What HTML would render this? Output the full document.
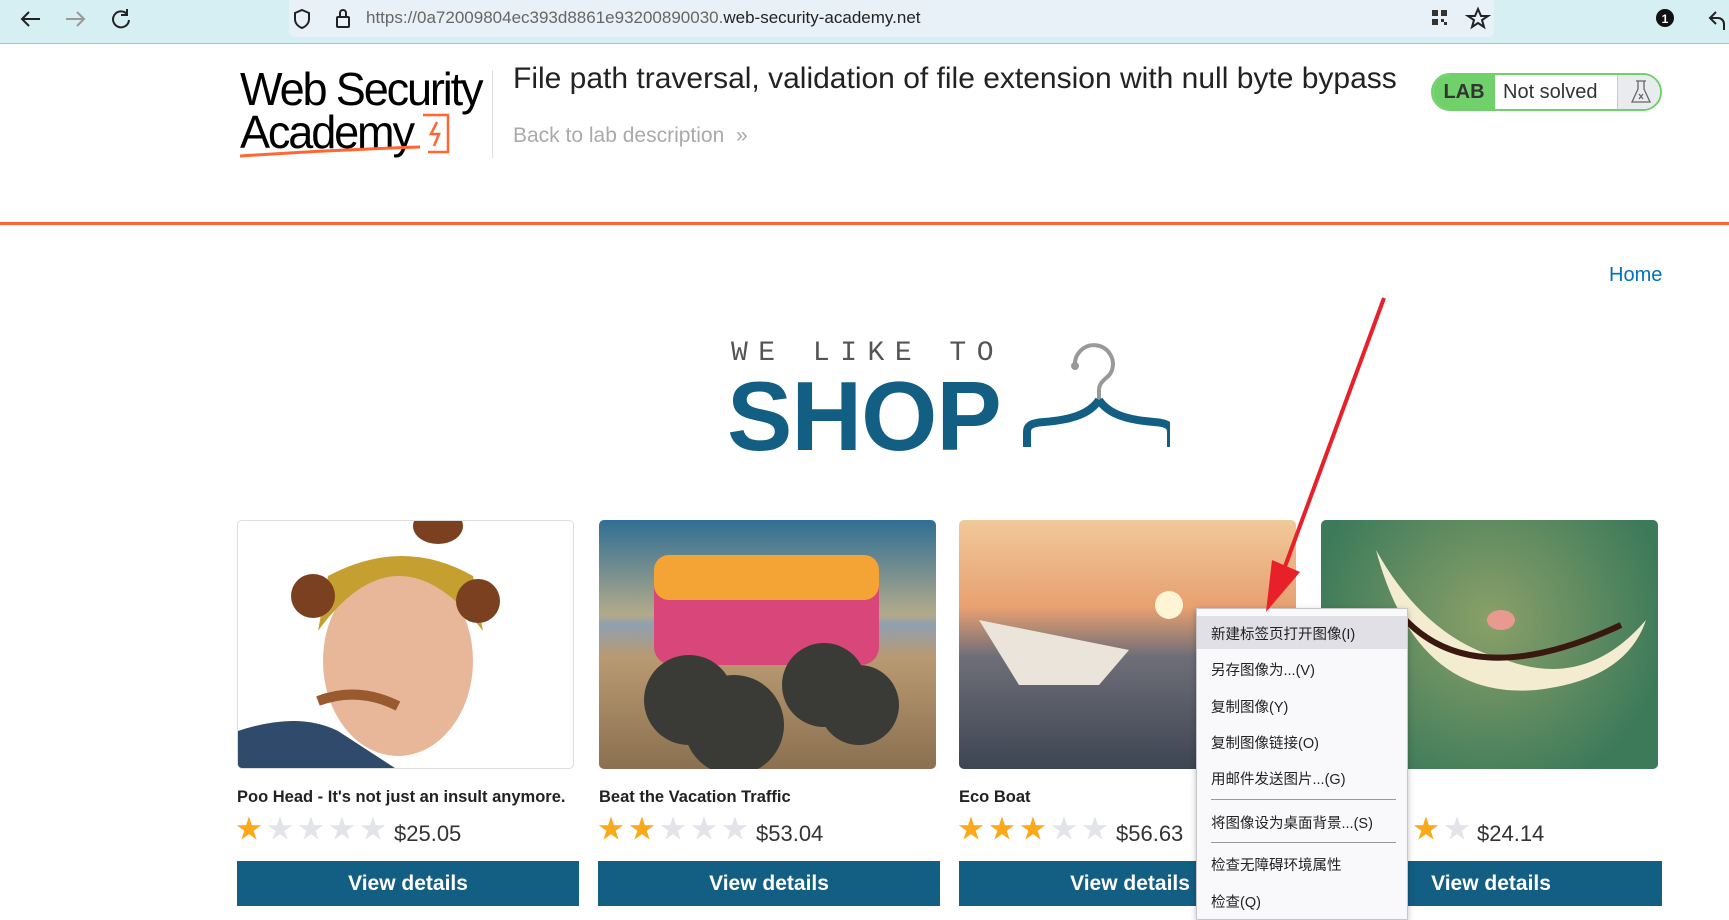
<!DOCTYPE html>
<html><head><meta charset="utf-8"><style>
*{margin:0;padding:0;box-sizing:border-box}
body{width:1729px;height:918px;overflow:hidden;background:#fff;font-family:"Liberation Sans","Noto Sans CJK SC",sans-serif;position:relative}
.abs{position:absolute}
.bar{left:0;top:0;width:1729px;height:44px;background:#d5eff3;border-bottom:1px solid #a9c4c8}
.url{left:289px;top:0;width:1205px;height:37px;background:#e8f1f7;border-radius:0 0 6px 6px}
.card{width:337px;height:249px;border-radius:5px;overflow:hidden}
.ttl{font-weight:bold;font-size:16.5px;color:#222}
.btn{width:342px;height:45px;background:#135e83;color:#fff;font-weight:bold;font-size:21px;text-align:center;line-height:45px}
.price{font-size:22px;color:#333}
.star{font-size:26px;line-height:27px;letter-spacing:5px}
.on{color:#f9a91a}.off{color:#e2e4ea}
.menu{left:1196px;top:608px;width:212px;height:312px;background:#f9f9fb;border:1px solid #c8c8cc;box-shadow:0 2px 6px rgba(0,0,0,.25)}
.mi{position:absolute;left:14px;font-size:14.5px;color:#222}
.sep{position:absolute;left:14px;width:185px;height:1px;background:#999}
</style></head><body>
<div class="abs bar"></div>
<div class="abs url"></div>
<svg class="abs" style="left:0;top:0" width="1729" height="44">
<g stroke="#222" stroke-width="2" fill="none">
<path d="M40 19H22M29 12l-7 7 7 7"/>
<path d="M66 19h17M77 12l7 7-7 7" stroke="#999"/>
<path d="M127 14a8 8 0 1 0 2 6M127 9v6h-6"/>
<path d="M302 10l7 3v6c0 5-4 8-7 9-3-1-7-4-7-9v-6z"/>
<rect x="337" y="17" width="12" height="10" rx="1"/><path d="M340 17v-4a3 3 0 0 1 6 0v4"/>
<path d="M1478 9l3 7h7l-6 4 2 7-6-4-6 4 2-7-6-4h7z"/>
<path d="M1716 12l-6 6 6 6M1710 18h8a6 6 0 0 1 6 6v6"/>
</g>
<g fill="#333"><rect x="1432" y="10" width="6" height="6"/><rect x="1441" y="10" width="6" height="6"/><rect x="1432" y="19" width="6" height="6"/><rect x="1441" y="19" width="3" height="3"/><rect x="1444" y="22" width="3" height="3"/></g>
<circle cx="1665" cy="18" r="9" fill="#111"/><text x="1665" y="23" font-size="12" fill="#fff" text-anchor="middle" font-weight="bold" font-family="Liberation Sans">1</text>
</svg>
<div class="abs" style="left:366px;top:8px;font-size:17px;color:#666">https://0a72009804ec393d8861e93200890030.<span style="color:#222">web-security-academy.net</span></div>

<div class="abs" style="left:240px;top:68px;font-size:46px;line-height:43px;letter-spacing:-2.2px;color:#000;transform:scaleX(0.98);transform-origin:left">Web Security<br>Academy</div>
<svg class="abs" style="left:238px;top:112px" width="230" height="50"><path d="M185 3h25v37h-20" stroke="#f63" stroke-width="2.5" fill="none"/><path d="M199 10l-6 12 8 0-5 12" stroke="#f63" stroke-width="2.5" fill="none"/><path d="M2 44q90-6 180-9" stroke="#f63" stroke-width="3" fill="none"/></svg>
<div class="abs" style="left:492px;top:70px;width:1px;height:88px;background:#ddd"></div>
<div class="abs" style="left:513px;top:62px;font-size:30px;color:#222">File path traversal, validation of file extension with null byte bypass</div>
<div class="abs" style="left:513px;top:124px;font-size:21px;color:#aaa">Back to lab description &nbsp;»</div>
<div class="abs" style="left:1431px;top:73px;width:231px;height:38px;border:2px solid #70d16a;border-radius:20px;overflow:hidden;background:#fff">
<div class="abs" style="left:0;top:0;width:62px;height:34px;background:#70d16a;font-weight:bold;font-size:20px;line-height:34px;text-align:center;color:#333">LAB</div>
<div class="abs" style="left:70px;top:0;font-size:20px;line-height:34px;color:#333">Not solved</div>
<div class="abs" style="left:184px;top:0;width:47px;height:34px;background:#e9ecef;border-left:1px solid #ccc"></div>
<svg class="abs" style="left:196px;top:4px" width="24" height="26"><path d="M9 2v8L3 23h18L15 10V2M7 2h10M10 15l4 5M14 15l-4 5" stroke="#666" stroke-width="1.3" fill="none"/></svg>
</div>
<div class="abs" style="left:0;top:222px;width:1729px;height:3px;background:#ff6633"></div>
<div class="abs" style="left:1609px;top:264px;font-size:20px;color:#0071bc">Home</div>

<div class="abs" style="left:731px;top:338px;font-family:'Liberation Mono',monospace;font-size:28px;letter-spacing:10.5px;color:#555">WE LIKE TO</div>
<div class="abs" style="left:727px;top:360px;font-weight:bold;font-size:98px;color:#135e83;letter-spacing:-1px">SHOP</div>
<svg class="abs" style="left:1020px;top:340px" width="150" height="115"><path d="M55 26a19 19 0 1 1 37 4c-2 8-13 10-13 20v10" stroke="#999" stroke-width="4" fill="none"/><circle cx="55" cy="26" r="4" fill="#999"/><path d="M79 60c-10 15-30 20-55 22-15 1-17 5-17 10v15M79 60c10 15 30 20 55 22 15 1 17 5 17 10v15" stroke="#135e83" stroke-width="8" fill="none"/></svg>

<div class="abs card" style="left:237px;top:520px;border:1px solid #ddd;background:#fff">
<svg width="337" height="249"><ellipse cx="160" cy="140" rx="75" ry="95" fill="#e8b79a"/><path d="M80 110q80-110 165 0l-10-55q-70-40-145 0z" fill="#c5a030"/><circle cx="75" cy="75" r="22" fill="#7a4020"/><circle cx="240" cy="80" r="22" fill="#7a4020"/><ellipse cx="200" cy="5" rx="25" ry="18" fill="#7a4020"/><path d="M0 210q60-20 100 0l60 39H0z" fill="#2f4a6a"/><path d="M80 180q40-15 80 5" stroke="#9a5a30" stroke-width="10" fill="none"/></svg></div>
<div class="abs card" style="left:599px;top:520px;background:linear-gradient(#2f6f95 0%,#b2aa8a 38%,#8fa0b0 42%,#b99a72 55%,#8a7050 100%)">
<svg width="337" height="249"><rect x="55" y="35" width="225" height="110" rx="18" fill="#d8467a"/><rect x="55" y="35" width="225" height="45" rx="15" fill="#f4a434"/><g fill="#3a3a36"><circle cx="90" cy="180" r="45"/><circle cx="225" cy="165" r="42"/><circle cx="135" cy="205" r="50"/><circle cx="260" cy="185" r="40"/></g></svg></div>
<div class="abs card" style="left:959px;top:520px;background:linear-gradient(#f1c99a 0%,#e8a070 35%,#6e6e78 55%,#3d4552 100%)">
<svg width="337" height="249"><circle cx="210" cy="85" r="14" fill="#fff5d5"/><path d="M20 100l150 30-30 35H60z" fill="#eae4da"/></svg></div>
<div class="abs card" style="left:1321px;top:520px;background:radial-gradient(circle at 50% 40%,#8aa068,#3c7a5a 80%)">
<svg width="337" height="249"><path d="M55 30q40 150 160 140q90-10 110-70q-60 70-140 40q-80-20-130-110z" fill="#f3ecd0"/><path d="M80 95q70 80 220 10" stroke="#3a1810" stroke-width="6" fill="none"/><ellipse cx="180" cy="100" rx="14" ry="10" fill="#e89a90"/></svg></div>

<div class="abs ttl" style="left:237px;top:788px">Poo Head - It's not just an insult anymore.</div>
<div class="abs ttl" style="left:599px;top:788px">Beat the Vacation Traffic</div>
<div class="abs ttl" style="left:959px;top:788px">Eco Boat</div>
<div class="abs ttl" style="left:1321px;top:788px">Cat Grin</div>

<div class="abs star" style="left:236px;top:816px"><span class="on">★</span><span class="off">★★★★</span></div><div class="abs price" style="left:394px;top:821px">$25.05</div>
<div class="abs star" style="left:598px;top:816px"><span class="on">★★</span><span class="off">★★★</span></div><div class="abs price" style="left:756px;top:821px">$53.04</div>
<div class="abs star" style="left:958px;top:816px"><span class="on">★★★</span><span class="off">★★</span></div><div class="abs price" style="left:1116px;top:821px">$56.63</div>
<div class="abs star" style="left:1320px;top:816px"><span class="on">★★★★</span><span class="off">★</span></div><div class="abs price" style="left:1477px;top:821px">$24.14</div>

<div class="abs btn" style="left:237px;top:861px">View details</div>
<div class="abs btn" style="left:598px;top:861px">View details</div>
<div class="abs btn" style="left:959px;top:861px">View details</div>
<div class="abs btn" style="left:1320px;top:861px">View details</div>

<div class="abs menu">
<div class="abs" style="left:0;top:7px;width:210px;height:33px;background:#e0e0e6"></div>
<div class="mi" style="top:14px">新建标签页打开图像(I)</div>
<div class="mi" style="top:50px">另存图像为...(V)</div>
<div class="mi" style="top:87px">复制图像(Y)</div>
<div class="mi" style="top:123px">复制图像链接(O)</div>
<div class="mi" style="top:159px">用邮件发送图片...(G)</div>
<div class="sep" style="top:190px"></div>
<div class="mi" style="top:203px">将图像设为桌面背景...(S)</div>
<div class="sep" style="top:233px"></div>
<div class="mi" style="top:245px">检查无障碍环境属性</div>
<div class="mi" style="top:282px">检查(Q)</div>
</div>
<svg class="abs" style="left:1250px;top:290px" width="150" height="330"><path d="M134 8L30 290" stroke="#e8202a" stroke-width="4" fill="none"/><path d="M16 322L22 270 50 282z" fill="#e8202a"/></svg>
</body></html>
